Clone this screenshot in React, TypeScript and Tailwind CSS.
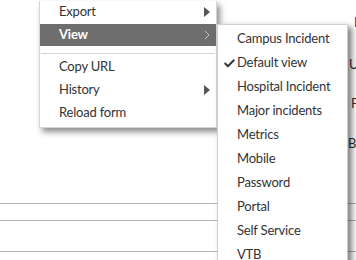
import { Check } from "lucide-react";

type Item = { label: string; arrow?: "solid" | "chevron"; active?: boolean };

const mainItems: (Item | "sep")[] = [
  { label: "Export", arrow: "solid" },
  { label: "View", arrow: "chevron", active: true },
  "sep",
  { label: "Copy URL" },
  { label: "History", arrow: "solid" },
  { label: "Reload form" },
];

const views = [
  "Campus Incident",
  "Default view",
  "Hospital Incident",
  "Major incidents",
  "Metrics",
  "Mobile",
  "Password",
  "Portal",
  "Self Service",
  "VTB",
];

function SolidArrow() {
  return (
    <svg width="6" height="10" viewBox="0 0 6 10" aria-hidden="true">
      <path d="M0 0 L6 5 L0 10 Z" fill="#555" />
    </svg>
  );
}

function ChevronArrow() {
  return (
    <svg width="6" height="10" viewBox="0 0 6 10" aria-hidden="true">
      <path d="M1 1 L5 5 L1 9" fill="none" stroke="#c8c8c8" strokeWidth="1" />
    </svg>
  );
}

export default function App() {
  return (
    <div className="relative h-[260px] w-[356px] overflow-hidden bg-white font-['Lato','Noto_Sans',sans-serif] text-[13px] tracking-[-0.2px] text-[#333]">
      {/* --- Page behind the menus (labels cut off by the window edge) ------- */}
      <div className="absolute left-[348px] top-0 flex w-[80px] flex-col">
        <span className="mt-[13px] pl-[6px]">ID</span>
        <span className="mt-[22px] pl-[1px]">Urgency</span>
        <span className="mt-[20px] pl-[3px]">Priority</span>
        <span className="mt-[20px]">Base</span>
      </div>
      <div className="absolute inset-x-0 top-[203px] h-px bg-[#b5b5b5]" />
      <div className="absolute inset-x-0 top-[220px] h-px bg-[#b5b5b5]" />
      <div className="absolute inset-x-0 top-[251px] h-px bg-[#b5b5b5]" />

      {/* --- Context menu --------------------------------------------------- */}
      <div className="absolute left-[39px] top-[1px] flex w-[178px] flex-col gap-px border-x border-b border-[#d6d6d6] bg-white pb-[3px] shadow-[3px_4px_6px_rgba(0,0,0,0.45)]">
        {mainItems.map((item, i) =>
          item === "sep" ? (
            <div className="mx-[1px] mb-px mt-[6px] h-px bg-[#d4d4d4]" key={i} />
          ) : (
            <div
              className={
                item.active
                  ? "flex h-[22px] items-center justify-between bg-[#6e6e6e] pl-[19px] pr-[6px] font-bold text-white"
                  : "flex h-[22px] items-center justify-between pl-[19px] pr-[6px]"
              }
              key={item.label}
            >
              <span>{item.label}</span>
              {item.arrow === "solid" && <SolidArrow />}
              {item.arrow === "chevron" && <ChevronArrow />}
            </div>
          ),
        )}
      </div>

      {/* --- View submenu --------------------------------------------------- */}
      <div className="absolute left-[217px] top-[24px] flex w-[131px] flex-col border border-[#d0d0d0] bg-white pb-[10px] pt-[2px] shadow-[4px_3px_6px_rgba(0,0,0,0.5)]">
        {views.map((label) => (
          <div className="relative flex h-[24px] items-center pl-[19px]" key={label}>
            {label === "Default view" && (
              <Check className="absolute left-[5px] h-[13px] w-[13px] text-[#333]" strokeWidth={3.5} />
            )}
            <span>{label}</span>
          </div>
        ))}
      </div>
    </div>
  );
}
